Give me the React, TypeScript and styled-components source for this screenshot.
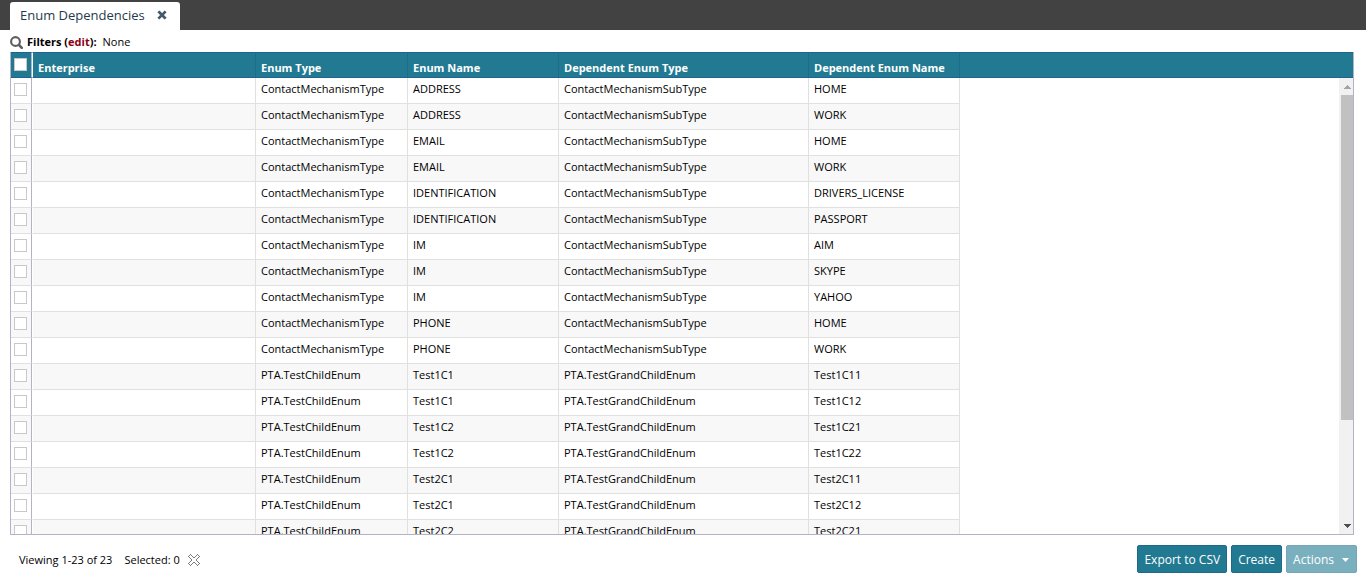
import React, { useState } from 'react';
import styled, { createGlobalStyle, css } from 'styled-components';

const GlobalStyle = createGlobalStyle`
  *, *::before, *::after { box-sizing: border-box; }
  body { margin: 0; background: #fff; color: #000; font: 11px/16px 'Open Sans', sans-serif; }
  button, input { font-family: inherit; }
`;

const Page = styled.div`
  display: flex;
  flex-direction: column;
  height: 100vh;
`;

const TabBar = styled.header`
  display: flex;
  align-items: flex-end;
  height: 30px;
  padding-left: 10px;
  background: #424242;
`;

const Tab = styled.div`
  display: flex;
  align-items: center;
  gap: 12px;
  width: 170px;
  height: 28px;
  padding: 0 10px 2px;
  border-radius: 3px 3px 0 0;
  background: #fff;
  color: #1f3b4d;
  font-size: 13px;
  line-height: 26px;
  white-space: nowrap;
`;

const IconButton = styled.button`
  display: flex;
  padding: 0;
  border: 0;
  background: none;
  cursor: pointer;
`;

const FilterBar = styled.div`
  display: flex;
  align-items: center;
  height: 22px;
  padding: 2px 10px 0;
  white-space: pre;
`;

const FilterLabel = styled.strong`
  margin: 0 6px 0 4px;
`;

const EditLink = styled.a`
  color: #8b0010;
  text-decoration: none;
`;

const GridFrame = styled.main`
  position: relative;
  flex: 1;
  min-height: 0;
  margin: 0 12px 0 10px;
  border: 1px solid #b3b3c8;
  border-top: 0;
`;

const GridScroll = styled.div`
  height: 100%;
  overflow-y: auto;
  scrollbar-width: none;
`;

const Table = styled.table`
  width: 100%;
  table-layout: fixed;
  border-collapse: separate;
  border-spacing: 0;
`;

const selectCell = css`
  padding: 5px 0 0 3px;
  border-right: 1px solid #b3b3c8;
`;

const HeadCell = styled.th<{ $select?: boolean; $filler?: boolean }>`
  position: sticky;
  top: 0;
  height: 26px;
  padding: 6px 5px 0;
  border-top: 1px solid #1f6490;
  border-bottom: 1px solid #1f6490;
  border-right: ${(p) => (p.$filler ? '0' : '1px solid #1f6a8e')};
  background: #227a92;
  color: #fff;
  line-height: 18px;
  text-align: left;
  vertical-align: top;
  white-space: nowrap;
  &:nth-child(2) { border-left: 1px solid #fff; }
  ${(p) => p.$select && selectCell}
`;

const Row = styled.tr`
  &:nth-child(even) > td { background: #f8f8f8; }
  &:nth-child(even) > td:last-child { background: #fff; }
`;

const Cell = styled.td<{ $select?: boolean; $filler?: boolean }>`
  height: 26px;
  padding: 2px 5px 0;
  border-bottom: ${(p) => (p.$filler ? '0' : '1px solid #e0e0e0')};
  border-right: ${(p) => (p.$filler ? '0' : '1px solid #e0e0e0')};
  line-height: 18px;
  vertical-align: top;
  white-space: nowrap;
  &:nth-child(2) { border-left: 1px solid #fff; }
  ${(p) => p.$select && selectCell}
`;

const CheckBox = styled.input`
  display: block;
  appearance: none;
  width: 13px;
  height: 13px;
  margin: 0;
  border: 1px solid #c8c8c8;
  background: #fff;
  &:checked { background: #227a92; }
`;

const ScrollTrack = styled.div`
  position: absolute;
  top: 26px;
  right: 0;
  bottom: 0;
  display: flex;
  flex-direction: column;
  width: 14px;
  background: #f1f1f1;
`;

const ScrollArrow = styled.div`
  display: flex;
  align-items: center;
  justify-content: center;
  height: 17px;
  padding-left: 3px;
`;

const ScrollRail = styled.div`
  flex: 1;
  padding-left: 2px;
`;

const ScrollThumb = styled.div`
  height: 77%;
  background: #c1c1c1;
`;

const Footer = styled.footer`
  display: flex;
  align-items: center;
  justify-content: space-between;
  height: 47px;
  padding: 1px 9px 0 19px;
`;

const Status = styled.div`
  display: flex;
  align-items: center;
  gap: 12px;
  padding-top: 2px;
`;

const Selection = styled.div`
  display: flex;
  align-items: center;
  gap: 8px;
`;

const Actions = styled.div`
  display: flex;
  gap: 4px;
`;

const Button = styled.button`
  display: flex;
  align-items: center;
  justify-content: center;
  gap: 7px;
  height: 28px;
  padding: 1px 6px 0;
  border: 1px solid #1f6a8c;
  border-radius: 2px;
  background: #227a92;
  color: #fff;
  font-size: 12px;
  line-height: 19px;
  white-space: nowrap;
  &:disabled { border-color: #74a5bb; background: #7aafbe; }
`;

const SearchIcon = () => (
  <svg width="13" height="13" viewBox="0 0 13 13" fill="none" stroke="#5e5e5e" aria-hidden="true">
    <circle cx="5.500" cy="5.500" r="4.400" strokeWidth="2.100" />
    <path d="M9 9l2.800 2.800" strokeWidth="2.500" strokeLinecap="round" />
  </svg>
);

const CloseIcon = () => (
  <svg width="10" height="10" viewBox="0 0 10 10" aria-hidden="true">
    <path d="M2.300 2.300l5.400 5.400M7.700 2.300l-5.400 5.400" stroke="#44596a" strokeWidth="2.700" strokeLinecap="square" />
  </svg>
);

const ClearIcon = () => (
  <svg width="12" height="12" viewBox="0 0 12 12" aria-hidden="true">
    <path
      d="M2.500.5L6 4 9.500.5l2 2L8 6l3.500 3.500-2 2L6 8l-3.500 3.500-2-2L4 6 .5 2.500z"
      fill="#fff"
      stroke="#333"
      strokeWidth="1"
      strokeDasharray="1.100 .314"
    />
  </svg>
);

const ScrollGlyph = ({ up }: { up?: boolean }) => (
  <svg width="7" height="4" viewBox="0 0 7 4" shapeRendering="crispEdges" aria-hidden="true">
    <path d={up ? 'M3.500 0L7 4H0z' : 'M0 0h7L3.500 4z'} fill={up ? '#a3a3a3' : '#505050'} />
  </svg>
);

const Caret = () => (
  <svg width="9" height="4" viewBox="0 0 9 4" aria-hidden="true">
    <path d="M1 0h7L4.500 4z" fill="#fff" />
  </svg>
);

const columns = [
  { title: 'Enterprise', width: 224 },
  { title: 'Enum Type', width: 152 },
  { title: 'Enum Name', width: 151 },
  { title: 'Dependent Enum Type', width: 250 },
  { title: 'Dependent Enum Name', width: 151 },
];

const contact = (name: string, dependent: string) => ['', 'ContactMechanismType', name, 'ContactMechanismSubType', dependent];
const pta = (name: string, dependent: string) => ['', 'PTA.TestChildEnum', name, 'PTA.TestGrandChildEnum', dependent];

const rows = [
  contact('ADDRESS', 'HOME'),
  contact('ADDRESS', 'WORK'),
  contact('EMAIL', 'HOME'),
  contact('EMAIL', 'WORK'),
  contact('IDENTIFICATION', 'DRIVERS_LICENSE'),
  contact('IDENTIFICATION', 'PASSPORT'),
  contact('IM', 'AIM'),
  contact('IM', 'SKYPE'),
  contact('IM', 'YAHOO'),
  contact('PHONE', 'HOME'),
  contact('PHONE', 'WORK'),
  pta('Test1C1', 'Test1C11'),
  pta('Test1C1', 'Test1C12'),
  pta('Test1C2', 'Test1C21'),
  pta('Test1C2', 'Test1C22'),
  pta('Test2C1', 'Test2C11'),
  pta('Test2C1', 'Test2C12'),
  pta('Test2C2', 'Test2C21'),
];

export default function App() {
  const [selected, setSelected] = useState<number[]>([]);
  const toggle = (i: number) =>
    setSelected((s) => (s.includes(i) ? s.filter((n) => n !== i) : [...s, i]));
  const allSelected = selected.length === rows.length;

  return (
    <Page>
      <GlobalStyle />
      <TabBar>
        <Tab>
          Enum Dependencies
          <IconButton type="button" aria-label="Close tab"><CloseIcon /></IconButton>
        </Tab>
      </TabBar>
      <FilterBar>
        <SearchIcon />
        <FilterLabel>Filters (<EditLink href="#filters">edit</EditLink>):</FilterLabel>
        <span>None</span>
      </FilterBar>
      <GridFrame>
        <GridScroll>
          <Table>
            <colgroup>
              <col width={21} />
              {columns.map((c) => <col key={c.title} width={c.width} />)}
              <col />
            </colgroup>
            <thead>
              <tr>
                <HeadCell $select>
                  <CheckBox
                    type="checkbox"
                    aria-label="Select all"
                    checked={allSelected}
                    onChange={() => setSelected(allSelected ? [] : rows.map((_, i) => i))}
                  />
                </HeadCell>
                {columns.map((c) => <HeadCell key={c.title} scope="col">{c.title}</HeadCell>)}
                <HeadCell as="td" $filler />
              </tr>
            </thead>
            <tbody>
              {rows.map((row, i) => (
                <Row key={i}>
                  <Cell $select>
                    <CheckBox
                      type="checkbox"
                      aria-label={`Select row ${i + 1}`}
                      checked={selected.includes(i)}
                      onChange={() => toggle(i)}
                    />
                  </Cell>
                  {row.map((value, j) => <Cell key={j}>{value}</Cell>)}
                  <Cell $filler />
                </Row>
              ))}
            </tbody>
          </Table>
        </GridScroll>
        <ScrollTrack aria-hidden="true">
          <ScrollArrow><ScrollGlyph up /></ScrollArrow>
          <ScrollRail><ScrollThumb /></ScrollRail>
          <ScrollArrow><ScrollGlyph /></ScrollArrow>
        </ScrollTrack>
      </GridFrame>
      <Footer>
        <Status>
          <span>Viewing 1-23 of 23</span>
          <Selection>
            <span>Selected: {selected.length}</span>
            <IconButton type="button" aria-label="Clear selection" onClick={() => setSelected([])}>
              <ClearIcon />
            </IconButton>
          </Selection>
        </Status>
        <Actions>
          <Button type="button">Export to CSV</Button>
          <Button type="button">Create</Button>
          <Button type="button" disabled>Actions <Caret /></Button>
        </Actions>
      </Footer>
    </Page>
  );
}
